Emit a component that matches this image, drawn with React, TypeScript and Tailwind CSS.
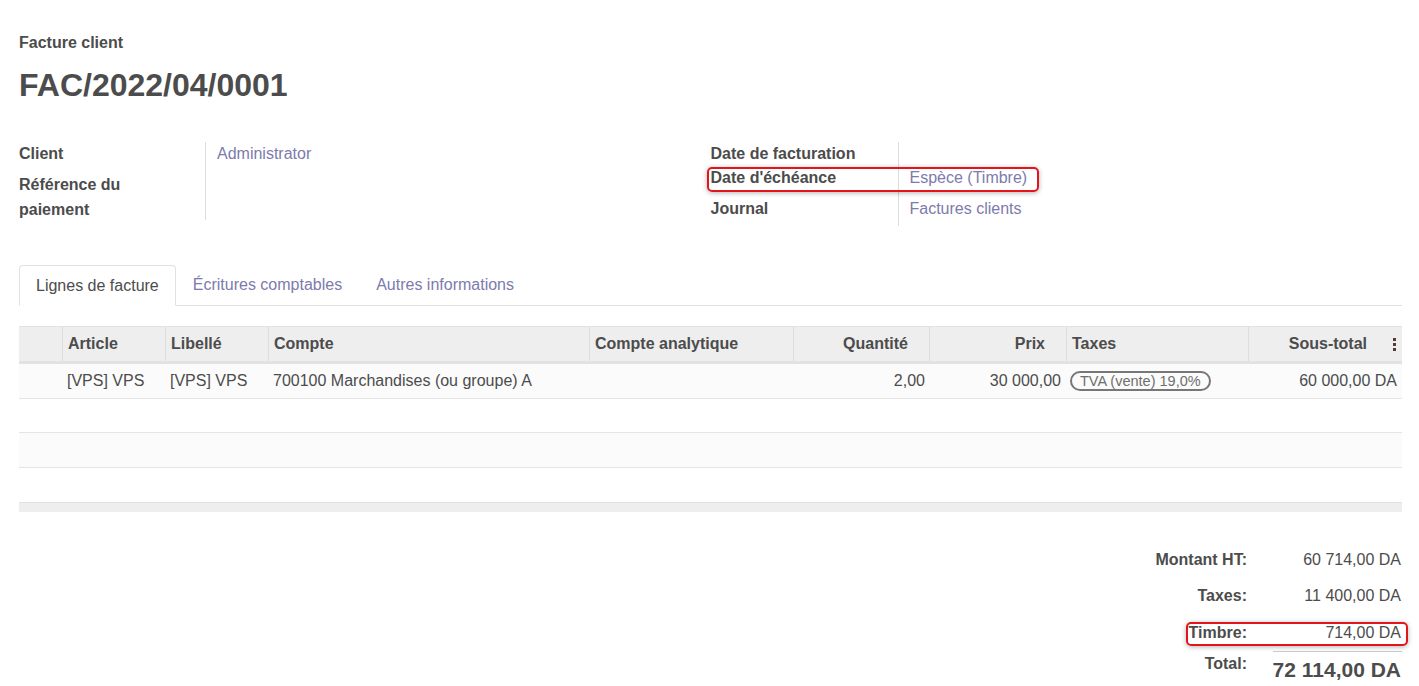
/**
 * Facture client — form view
 */

const cols = 'grid grid-cols-[43px_103px_103px_321px_204px_136px_137px_182px_154px]';

function Highlight({ className }: { className: string }) {
  return (
    <div
      className={`pointer-events-none absolute rounded-[5px] border-2 border-[#e4141b] shadow-[0_1px_5px_rgba(0,0,0,0.3)] ${className}`}
    />
  );
}

export default function App() {
  return (
    <div className="min-h-[686px] bg-white pl-[19px] pr-[17px] pt-[31px] text-[16px] text-[#4c4c4c] [font-family:'Liberation_Sans',Arial,sans-serif]">
      <div className="leading-[24px] font-bold">Facture client</div>
      <h1 className="mt-[11px] text-[32px] leading-[38px] font-bold">FAC/2022/04/0001</h1>

      {/* field groups */}
      <div className="mt-[38px] grid grid-cols-2 items-start">
        <div className="grid grid-cols-[187px_1fr]">
          <div className="h-[30px] border-r border-[#dcdcdc] leading-[24px] font-bold">Client</div>
          <div className="h-[30px] pl-[11px] leading-[24px] text-[#7c7bad]">Administrator</div>
          <div className="h-[48px] border-r border-[#dcdcdc] leading-[25px] font-bold">
            Référence du
            <br />
            paiement
          </div>
          <div className="pl-[11px]" />
        </div>

        <div className="relative grid grid-cols-[188px_1fr]">
          <div className="h-[24px] border-r border-[#dcdcdc] leading-[24px] font-bold">Date de facturation</div>
          <div className="pl-[11px]" />
          <div className="h-[31px] border-r border-[#dcdcdc] leading-[24px] font-bold">Date d'échéance</div>
          <div className="pl-[11px] leading-[24px] text-[#7c7bad]">Espèce (Timbre)</div>
          <div className="h-[29px] border-r border-[#dcdcdc] leading-[24px] font-bold">Journal</div>
          <div className="pl-[11px] leading-[24px] text-[#7c7bad]">Factures clients</div>
          <Highlight className="left-[-4px] top-[25px] h-[25px] w-[332px]" />
        </div>
      </div>

      {/* tabs */}
      <div className="mt-[39px] flex border-b border-[#dee2e6]">
        <div className="-mb-px h-[41px] rounded-t-[4px] border border-b-white border-[#dee2e6] bg-white px-[16px] leading-[40px]">
          Lignes de facture
        </div>
        <div className="pl-[17px] pr-[18px] leading-[40px] text-[#7c7bad]">Écritures comptables</div>
        <div className="px-[16px] leading-[40px] text-[#7c7bad]">Autres informations</div>
      </div>

      {/* lines */}
      <div className="mt-[20px]">
        <div className={`${cols} h-[38px] border-t border-b-[3px] border-[#e2e2e2] bg-[#eeeeee] font-bold leading-[34px]`}>
          <div />
          <div className="border-l border-[#dddddd] pl-[5px]">Article</div>
          <div className="border-l border-[#dddddd] pl-[5px]">Libellé</div>
          <div className="border-l border-[#dddddd] pl-[5px]">Compte</div>
          <div className="border-l border-[#dddddd] pl-[5px]">Compte analytique</div>
          <div className="border-l border-[#dddddd] pr-[21px] text-right">Quantité</div>
          <div className="border-l border-[#dddddd] pr-[21px] text-right">Prix</div>
          <div className="border-l border-[#dddddd] pl-[5px]">Taxes</div>
          <div className="flex items-center justify-end gap-[26px] border-l border-[#dddddd] pr-[6px]">
            <span>Sous-total</span>
            <span className="flex flex-col gap-[2px]">
              <span className="h-[3px] w-[3px] bg-[#523c3c]" />
              <span className="h-[3px] w-[3px] bg-[#523c3c]" />
              <span className="h-[3px] w-[3px] bg-[#523c3c]" />
            </span>
          </div>
        </div>

        <div className={`${cols} h-[34.5px] items-center border-b border-[#e4e4e4] bg-[#fbfbfb]`}>
          <div />
          <div className="pl-[5px]">[VPS] VPS</div>
          <div className="pl-[5px]">[VPS] VPS</div>
          <div className="pl-[5px]">700100 Marchandises (ou groupe) A</div>
          <div />
          <div className="pr-[4px] text-right">2,00</div>
          <div className="pr-[5px] text-right">30 000,00</div>
          <div className="pl-[4px]">
            <span className="inline-block h-[20px] rounded-full border-2 border-[#777777] px-[8px] text-[14.5px] leading-[16px] text-[#6f6f6f]">
              TVA (vente) 19,0%
            </span>
          </div>
          <div className="pr-[5px] text-right">60 000,00 DA</div>
        </div>
        <div className="h-[34.5px] border-b border-[#e4e4e4] bg-white" />
        <div className="h-[34.5px] border-b border-[#e4e4e4] bg-[#fbfbfb]" />
        <div className="h-[34.5px] bg-white" />
        <div className="h-[10px] border-t border-[#e2e2e2] bg-[#eeeeee]" />
      </div>

      {/* totals */}
      <div className="ml-auto mt-[30px] w-[300px]">
        <div className="flex h-[36px] items-center">
          <div className="flex-1 pr-[26px] text-right font-bold">Montant HT:</div>
          <div className="w-[129px] pr-[1px] text-right">60 714,00 DA</div>
        </div>
        <div className="flex h-[36px] items-center">
          <div className="flex-1 pr-[26px] text-right font-bold">Taxes:</div>
          <div className="w-[129px] pr-[1px] text-right">11 400,00 DA</div>
        </div>
        <div className="relative flex h-[37px] items-center">
          <div className="flex-1 pr-[26px] text-right font-bold">Timbre:</div>
          <div className="w-[129px] pr-[1px] text-right">714,00 DA</div>
          <Highlight className="left-[84px] right-[-6px] top-[8px] h-[24px]" />
        </div>
        <div className="flex items-start">
          <div className="flex-1 pr-[26px] pt-[1px] text-right leading-[24px] font-bold">Total:</div>
          <div className="flex w-[129px] justify-end border-t border-[#cccccc] pr-[1px] pt-[4px]">
            <span className="whitespace-nowrap text-[21px] leading-[28px] font-bold">72 114,00 DA</span>
          </div>
        </div>
      </div>
    </div>
  );
}
